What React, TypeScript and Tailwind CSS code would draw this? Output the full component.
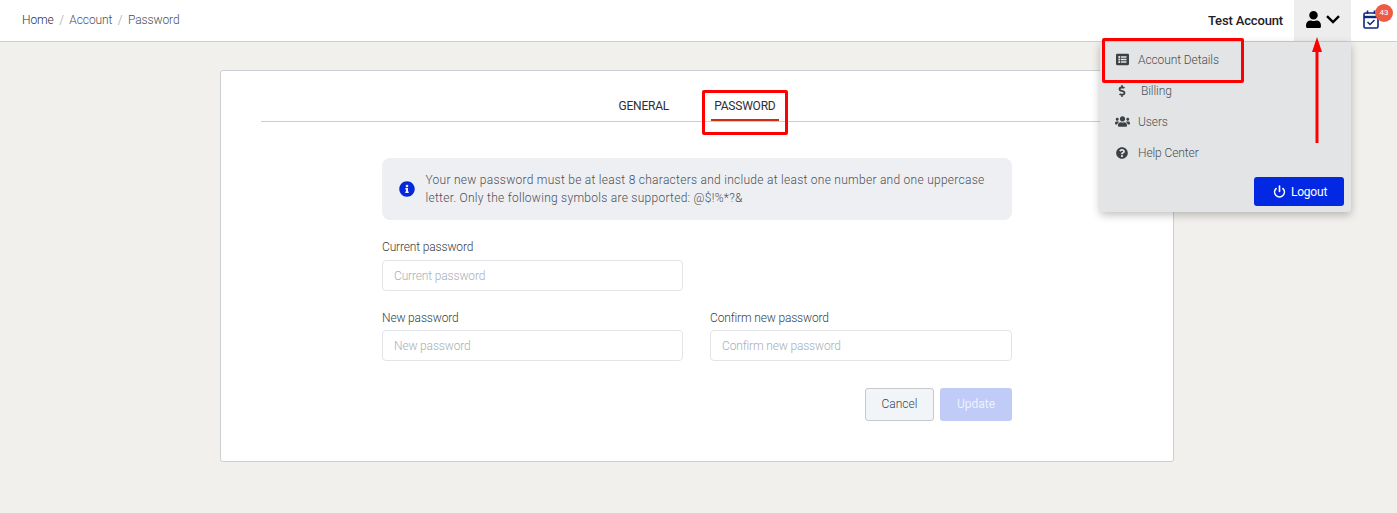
import { FaDollarSign, FaInfoCircle, FaListAlt, FaQuestionCircle, FaUser, FaUsers } from "react-icons/fa";
import { FiPower } from "react-icons/fi";

const Field = ({ label, className, inputClass }: { label: string; className?: string; inputClass: string }) => {
  return (
    <div className={className}>
      <label className="block text-[12px] leading-[14px] tracking-[-0.15px] text-[#3a3f45]">{label}</label>
      <input
        placeholder={label}
        className={`${inputClass} block h-[31px] w-full rounded-[4px] border border-[#e2e4e8] bg-white px-[11px] text-[12px] tracking-[-0.15px] outline-none placeholder:text-[#a9afb6]`}
      />
    </div>
  );
};

const menu = [
  { label: "Account Details", icon: <FaListAlt className="text-[13px]" />, pad: "" },
  { label: "Billing", icon: <FaDollarSign className="text-[12px]" />, pad: "pl-[3px]" },
  { label: "Users", icon: <FaUsers className="text-[15px]" />, pad: "" },
  { label: "Help Center", icon: <FaQuestionCircle className="text-[12px]" />, pad: "" },
];

export default function App() {
  return (
    <div className="relative h-[513px] w-[1397px] overflow-hidden bg-[#f1f0ec] font-['Roboto',sans-serif] font-light">
      <header className="flex h-[42px] items-center border-b border-[#cfcfcf] bg-white pl-[22px]">
        <nav className="flex gap-[5.5px] pb-[2px] text-[12px] tracking-[-0.1px] text-[#4a4f55]">
          <span className="text-[#23304f]">Home</span>
          <span className="text-[#9a9ea3]">/</span>
          <span>Account</span>
          <span className="text-[#9a9ea3]">/</span>
          <span>Password</span>
        </nav>
        <div className="ml-auto flex h-full items-center">
          <span className="mr-[11px] text-[13px] font-medium tracking-[-0.15px] text-[#1d2026]">Test Account</span>
          <div className="flex h-[41px] w-[57px] items-center justify-center gap-[4px] bg-[#ededee] pb-[2px] text-black">
            <FaUser className="text-[17px]" />
            <svg width="14" height="9" viewBox="0 0 14 9" fill="none" stroke="currentColor" strokeWidth="2.4">
              <path d="M1 1.2 L7 7 L13 1.2" />
            </svg>
          </div>
          <div className="relative ml-[12px] mr-[16px] h-[41px] w-[18px]">
            <svg className="absolute left-0 top-[10px] text-[#0b2a78]" width="16" height="19" viewBox="0 0 16 19" fill="none" stroke="currentColor">
              <rect x="1" y="3" width="14" height="15" rx="1.5" strokeWidth="1.6" />
              <path d="M1 7 H15" strokeWidth="2.4" />
              <path d="M4.5 0.5 V4 M11.5 0.5 V4" strokeWidth="1.6" />
              <path d="M4.5 12 L7 14.5 L11.5 10" strokeWidth="1.5" />
            </svg>
            <span className="absolute left-[12px] top-[4px] flex h-[18px] w-[18px] items-center justify-center rounded-full bg-[#ee5b45] text-[8px] font-normal text-white">
              43
            </span>
          </div>
        </div>
      </header>

      <main className="ml-[220px] mt-[28px] h-[392px] w-[954px] rounded-[3px] border border-[#cdd0d2] bg-white px-[40px]">
        <div className="flex h-[51px] items-start justify-center gap-[42px] border-b border-[#c9ced6] pl-[3px] pt-[28px] text-[12px] font-normal tracking-[-0.2px] text-[#2c3036]">
          <span className="leading-[14px]">GENERAL</span>
          <span className="h-[22px] border-b-2 border-[#cc2f10] px-[3px] leading-[14px]">PASSWORD</span>
        </div>

        <div className="mx-auto mt-[36px] w-[630px]">
          <div className="flex h-[62px] items-center rounded-[8px] bg-[#eeeff3] pl-[17px] pr-[20px]">
            <FaInfoCircle className="shrink-0 text-[16px] text-[#0528d8]" />
            <p className="ml-[10.5px] text-[12px] leading-[18px] tracking-[0.27px] text-[#4a4f55]">
              Your new password must be at least 8 characters and include at least one number and one uppercase letter. Only the following symbols are supported: @$!%*?&amp;
            </p>
          </div>

          <Field label="Current password" className="mt-[20px] w-[301px]" inputClass="mt-[6px]" />

          <div className="mt-[20px] flex gap-[27px]">
            <Field label="New password" className="w-[301px]" inputClass="mt-[5px]" />
            <Field label="Confirm new password" className="w-[302px]" inputClass="mt-[5px]" />
          </div>

          <div className="mt-[27px] flex justify-end gap-[6px]">
            <button className="h-[33px] w-[69px] rounded-[3px] border border-[#c5c9cd] bg-[#f2f5f7] pb-[2px] text-[12px] text-[#3f444a]">
              Cancel
            </button>
            <button className="h-[33px] w-[72px] rounded-[3px] bg-[#c0cbf7] pb-[2px] text-[12px] font-normal text-[#eef1fd]">
              Update
            </button>
          </div>
        </div>
      </main>

      {/* dropdown */}
      <div className="absolute left-[1100px] top-[42px] h-[170px] w-[251px] rounded-b-[3px] bg-[#e3e4e6] shadow-[0_3px_8px_rgba(0,0,0,0.25)]">
        <ul className="pt-[2px] text-[12px] tracking-[-0.1px] text-[#4a4f55]">
          {menu.map((item) => (
            <li key={item.label} className="flex h-[31px] items-center">
              <span className="flex w-[44px] justify-center text-[#3c4146]">{item.icon}</span>
              <span className={`-ml-[6px] ${item.pad}`}>{item.label}</span>
            </li>
          ))}
        </ul>
        <button className="absolute left-[154px] top-[135px] flex h-[29px] w-[90px] items-center justify-center gap-[5px] rounded-[3px] bg-[#0328e4] pl-[2px] text-[12px] font-normal tracking-[-0.2px] text-white">
          <FiPower className="text-[13px]" strokeWidth={3} />
          Logout
        </button>
      </div>

      {/* annotations */}
      <div className="absolute left-[702px] top-[90px] h-[45px] w-[86px] rounded-[2px] border-[3px] border-[#ff0000]" />
      <div className="absolute left-[1102px] top-[38px] h-[45px] w-[142px] rounded-[2px] border-[3px] border-[#ff0000]" />
      <svg className="absolute left-[1310px] top-[36px]" width="14" height="110" viewBox="0 0 14 110">
        <path d="M7 1 L12 16 L8.5 16 L8.5 107 L5.5 107 L5.5 16 L2 16 Z" fill="#ff0000" />
      </svg>
    </div>
  );
}
